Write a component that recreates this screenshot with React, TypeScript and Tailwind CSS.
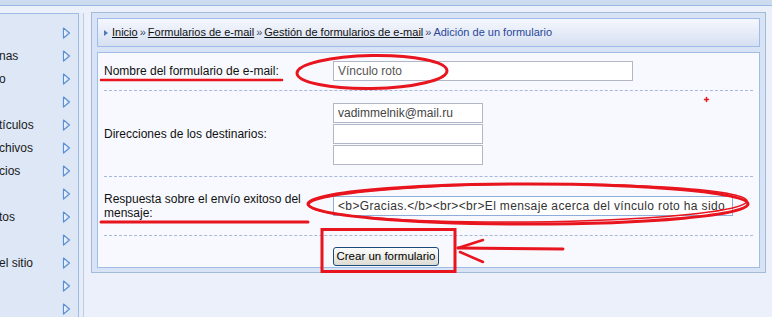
import React from 'react';

const sideItems = ['', 'nas', 'o', '', 'tículos', 'chivos', 'cios', '', 'tos', '', 'el sitio', '', ''];

const crumbs = ['Inicio', 'Formularios de e-mail', 'Gestión de formularios de e-mail'];

function SideArrow() {
  return (
    <svg width="9" height="12" viewBox="0 0 9 12">
      <defs>
        <linearGradient id="sa" x1="0" y1="0" x2="1" y2="0">
          <stop offset="0" stopColor="#ffffff" />
          <stop offset="1" stopColor="#b9d0f0" />
        </linearGradient>
      </defs>
      <polygon points="1.5,1 7.5,6 1.5,11" fill="url(#sa)" stroke="#5a8fd6" strokeWidth="1.2" strokeLinejoin="round" />
    </svg>
  );
}

function Sidebar() {
  return (
    <div className="mt-[7px] w-[84px] h-[304px] border-r border-[#bccde6] bg-[#e6edf8] shrink-0">
      <div className="w-[79px] h-full border-t border-r border-[#9dbbe3] bg-[#dde7f5] pt-[7px]">
        {sideItems.map((t, i) => (
          <div key={i} className="h-[23px] flex items-center justify-between pr-[7px] text-[#1a1a1a] whitespace-nowrap overflow-hidden">
            <span className="-ml-[1px]">{t}</span>
            <SideArrow />
          </div>
        ))}
      </div>
    </div>
  );
}

function Breadcrumb() {
  return (
    <div className="h-[29px] border border-[#9dbde8] bg-gradient-to-b from-[#f5f7fd] to-[#d6e0f2] flex items-center pl-[6px] whitespace-nowrap text-[11px]">
      <svg width="4" height="6" viewBox="0 0 4 6" className="mr-[4px] mt-[1px]">
        <polygon points="0,0 4,3 0,6" fill="#4f79b8" />
      </svg>
      {crumbs.map(c => (
        <React.Fragment key={c}>
          <a className="underline text-[#111] cursor-pointer">{c}</a>
          <span className="text-[#3a4a6a] mx-[2px]">»</span>
        </React.Fragment>
      ))}
      <span className="text-[#29479a]">Adición de un formulario</span>
    </div>
  );
}

function FormBox() {
  return (
    <div className="mt-[5px] h-[216px] border border-[#a0bde6] bg-[#f7f9fe] px-[6px]">
      <div className="flex items-center pt-[8px] pb-[9px] border-b border-dashed border-[#a7b8d9]">
        <label className="w-[229px] shrink-0 text-[#111]">Nombre del formulario de e-mail:</label>
        <input
          readOnly
          value="Vínculo roto"
          className="w-[300px] h-[20px] border border-[#b1b7c7] bg-white px-[4px] text-[#555] outline-none"
        />
      </div>
      <div className="flex items-center pt-[12px] pb-[11px] border-b border-dashed border-[#a7b8d9]">
        <label className="w-[229px] shrink-0 text-[#111]">Direcciones de los destinarios:</label>
        <div className="flex flex-col gap-[1px]">
          {['vadimmelnik@mail.ru', '', ''].map((v, i) => (
            <input
              key={i}
              readOnly
              value={v}
              className="w-[150px] h-[20px] border border-[#b1b7c7] bg-white px-[4px] text-[#444] outline-none"
            />
          ))}
        </div>
      </div>
      <div className="flex items-center pt-[15px] pb-[15px] border-b border-dashed border-[#a7b8d9]">
        <label className="w-[229px] shrink-0 pr-[20px] leading-[14px] text-[#111]">
          Respuesta sobre el envío exitoso del mensaje:
        </label>
        <input
          readOnly
          value="<b>Gracias.</b><br><br>El mensaje acerca del vínculo roto ha sido enviado."
          className="w-[400px] h-[20px] border border-[#8eadd9] bg-white px-[4px] text-[#333] tracking-[0.35px] outline-none"
        />
      </div>
      <div className="flex pt-[11px]">
        <div className="w-[229px] shrink-0" />
        <button className="w-[106px] h-[19px] rounded-[3px] border border-[#1d4a7c] bg-gradient-to-b from-[#fdfdfc] to-[#dcdcd4] text-[#000] text-[11.5px] leading-none">
          Crear un formulario
        </button>
      </div>
    </div>
  );
}

function Marks() {
  const red = '#e8141e';
  return (
    <svg className="absolute inset-0 pointer-events-none" width="772" height="317" viewBox="0 0 772 317">
      <g fill="none" stroke={red} strokeLinecap="round">
        <line x1="101" y1="80" x2="282" y2="80" strokeWidth="2.5" />
        <ellipse cx="372" cy="72" rx="75" ry="16.5" strokeWidth="3" transform="rotate(-1 372 72)" />
        <line x1="101" y1="222" x2="308" y2="222" strokeWidth="3" />
        <ellipse cx="528" cy="204" rx="220" ry="20" strokeWidth="3" />
        <ellipse cx="528" cy="203" rx="219" ry="19" strokeWidth="1.5" transform="rotate(-0.5 528 203)" />
        <rect x="322" y="229.5" width="133" height="42" strokeWidth="3" />
        <line x1="458" y1="248" x2="563" y2="249" strokeWidth="3" />
        <line x1="458" y1="248" x2="483" y2="240" strokeWidth="2.5" />
        <line x1="460" y1="252" x2="483" y2="262" strokeWidth="2.5" />
        <line x1="704.5" y1="99.5" x2="708.5" y2="99.5" strokeWidth="1.5" />
        <line x1="706.5" y1="97.5" x2="706.5" y2="101.5" strokeWidth="1.5" />
      </g>
    </svg>
  );
}

export default function App() {
  return (
    <div className="relative w-[772px] h-[317px] overflow-hidden bg-[#ebf0fa] font-['Liberation_Sans',Arial,sans-serif] text-[12px]">
      <div className="h-[6px] bg-[#cddbef] border-b border-[#9ab8e3]" />
      <div className="flex items-start">
        <Sidebar />
        <div className="mt-[6px] ml-[7px] w-[675px] h-[261px] border border-[#a4bbd8] bg-[#d8e4f5] p-[5px]">
          <Breadcrumb />
          <FormBox />
        </div>
      </div>
      <Marks />
    </div>
  );
}
